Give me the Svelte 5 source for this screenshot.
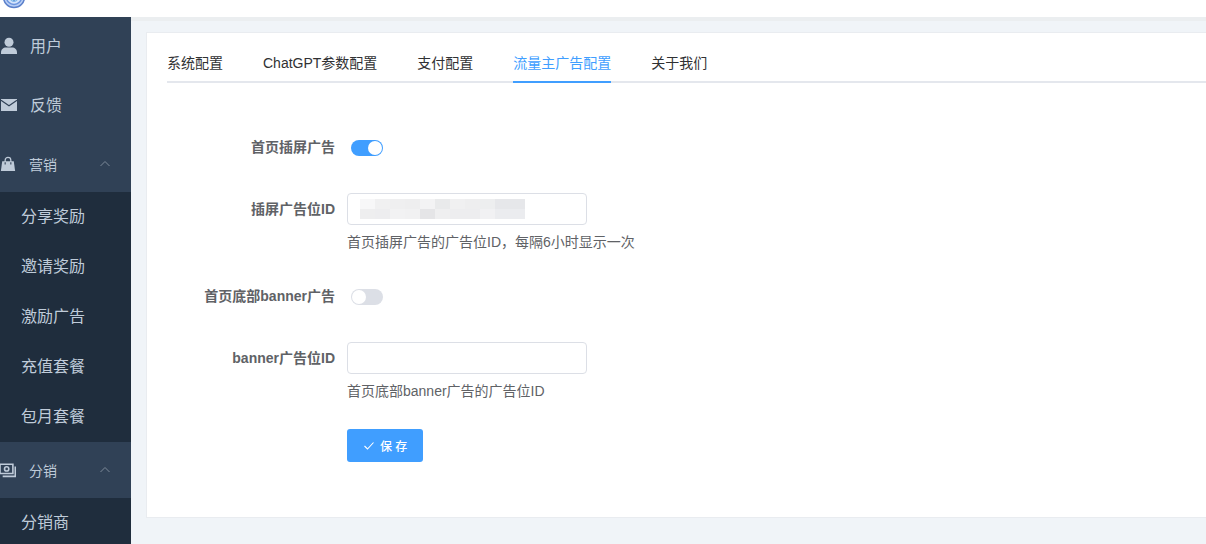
<script>
  let activeTab = $state('ads')
  let openMenus = $state({ marketing: true, distribution: true })

  const tabs = [
    { key: 'system', label: '系统配置' },
    { key: 'chatgpt', label: 'ChatGPT参数配置' },
    { key: 'pay', label: '支付配置' },
    { key: 'ads', label: '流量主广告配置' },
    { key: 'about', label: '关于我们' }
  ]

  const links = [
    { icon: 'user', label: '用户' },
    { icon: 'mail', label: '反馈' }
  ]

  const menus = [
    { key: 'marketing', icon: 'bag', label: '营销', items: ['分享奖励', '邀请奖励', '激励广告', '充值套餐', '包月套餐'] },
    { key: 'distribution', icon: 'money', label: '分销', items: ['分销商'] }
  ]

  // shades of the masked ad id, two rows
  const mask = [
    ['#f7f7f8', '#f0f0f1', '#efeff0', '#eeeeef', '#f3f3f4', '#e9eaeb', '#f0f0f1', '#eeeeef', '#edeeef', '#e6e7ea', '#e6e7ea'],
    ['#eeeeef', '#ededef', '#f2f2f3', '#f1f1f2', '#e5e5e7', '#efeff0', '#ededef', '#ededef', '#f1f1f3', '#ebecef', '#ebecef']
  ]

  let form = $state({
    insertOpen: true,
    insertId: '',
    bannerOpen: false,
    bannerId: ''
  })

  const toggleMenu = (key) => {
    openMenus[key] = !openMenus[key]
  }

  const save = (e) => {
    e.preventDefault()
  }
</script>

{#snippet icon(name)}
  <svg class="icon" viewBox="0 0 18 18" aria-hidden="true">
    {#if name == 'user'}
      <circle cx="9" cy="5.2" r="4.5" fill="currentColor" />
      <path d="M1 17v-1.500c0-3 2.200-5 5-5h6c2.800 0 5 2 5 5V17z" fill="currentColor" />
    {:else if name == 'mail'}
      <path d="M1 3h16v12H1z" fill="currentColor" />
      <path d="M1 4.200 9 9.800l8-5.600" fill="none" stroke="#304156" stroke-width="1.100" />
    {:else if name == 'bag'}
      <path d="M2.500 6h13l1.500 11H1z" fill="currentColor" />
      <path d="M5.800 7V4.800a3.200 3.200 0 0 1 6.400 0V7" fill="none" stroke="currentColor" stroke-width="1.400" />
      <path d="M5.800 7v2.500M12.200 7v2.500" stroke="#304156" stroke-width="1.200" />
    {:else}
      <path d="M0 2.500h14.500v10.500H0z" fill="none" stroke="currentColor" stroke-width="1.800" />
      <circle cx="7.500" cy="7.800" r="2.400" fill="none" stroke="currentColor" stroke-width="1.800" />
      <path d="M3 16.200h14.200V5" fill="none" stroke="currentColor" stroke-width="1.800" />
    {/if}
  </svg>
{/snippet}

<div class="layout">
  <header class="header">
    <svg class="logo" viewBox="0 0 24 24" role="img" aria-label="logo">
      <circle cx="12" cy="12" r="10.500" fill="#b9cff5" stroke="#5a7fca" stroke-width="1.500" />
      <circle cx="12" cy="12" r="7.500" fill="#d5e4fb" stroke="#6b94df" stroke-width="1.500" />
      <circle cx="12" cy="12" r="4.500" fill="#a5dcf5" stroke="#7fb2ea" />
      <path d="M9.500 13.500h5M12 11v5" stroke="#3c66b8" />
    </svg>
  </header>

  <div class="body">
    <nav class="sidebar">
      {#each links as link (link.label)}
        <a class="menu-link" href="#{link.icon}">
          {@render icon(link.icon)}
          <span>{link.label}</span>
        </a>
      {/each}

      {#each menus as menu (menu.key)}
        <button class="menu-title" type="button" aria-expanded={openMenus[menu.key]} onclick={() => toggleMenu(menu.key)}>
          {@render icon(menu.icon)}
          <span>{menu.label}</span>
          <svg class="arrow" class:closed={!openMenus[menu.key]} viewBox="0 0 12 12" aria-hidden="true">
            <path d="M1.500 8 6 3.500 10.500 8" fill="none" stroke="currentColor" />
          </svg>
        </button>
        {#if openMenus[menu.key]}
          <div class="submenu">
            {#each menu.items as item (item)}
              <a class="submenu-link" href="#{menu.key}">{item}</a>
            {/each}
          </div>
        {/if}
      {/each}
    </nav>

    <main class="main">
      <section class="card">
        <div class="tabs" role="tablist">
          {#each tabs as tab (tab.key)}
            <button
              class="tab"
              class:active={activeTab == tab.key}
              type="button"
              role="tab"
              aria-selected={activeTab == tab.key}
              onclick={() => (activeTab = tab.key)}>{tab.label}</button>
          {/each}
        </div>

        <form class="form" onsubmit={save}>
          <div class="form-item">
            <label class="label" for="insert-open">首页插屏广告</label>
            <div class="switch-wrap">
              <input id="insert-open" class="switch" type="checkbox" role="switch" bind:checked={form.insertOpen} />
            </div>
          </div>

          <div class="form-item">
            <label class="label" for="insert-id">插屏广告位ID</label>
            <div class="content">
              <div class="input-wrap">
                <input id="insert-id" class="input" type="text" bind:value={form.insertId} />
                <div class="mask" aria-hidden="true">
                  {#each mask as row}
                    <div class="mask-row">
                      {#each row as shade}
                        <i style="background: {shade}"></i>
                      {/each}
                    </div>
                  {/each}
                </div>
              </div>
              <p class="tip">首页插屏广告的广告位ID，每隔6小时显示一次</p>
            </div>
          </div>

          <div class="form-item">
            <label class="label" for="banner-open">首页底部banner广告</label>
            <div class="switch-wrap">
              <input id="banner-open" class="switch" type="checkbox" role="switch" bind:checked={form.bannerOpen} />
            </div>
          </div>

          <div class="form-item">
            <label class="label" for="banner-id">banner广告位ID</label>
            <div class="content">
              <input id="banner-id" class="input" type="text" bind:value={form.bannerId} />
              <p class="tip">首页底部banner广告的广告位ID</p>
            </div>
          </div>

          <button class="save" type="submit">
            <svg viewBox="0 0 12 12" aria-hidden="true">
              <path d="M1.500 6 4.500 9 10.500 2.500" fill="none" stroke="currentColor" stroke-width="1.100" />
            </svg>
            <span>保 存</span>
          </button>
        </form>
      </section>
    </main>
  </div>
</div>

<style>
  :global(body) {
    overflow: hidden;
  }

  .layout {
    display: flex;
    flex-direction: column;
    height: 100vh;
    overflow: hidden;
    background: #f0f4f8;
    font-family: "Liberation Sans", "Noto Sans CJK SC", sans-serif;
    font-size: 14px;
    color: #606266;
  }

  .layout :global(*) {
    box-sizing: border-box;
  }

  button,
  input {
    font: inherit;
    margin: 0;
  }

  .header {
    display: flex;
    align-items: flex-end;
    flex: none;
    height: 17px;
    padding: 0 2px 8px;
    background: #fff;
  }

  .logo {
    flex: none;
    width: 24px;
    height: 24px;
  }

  .body {
    display: flex;
    flex: 1;
    min-height: 0;
  }

  .sidebar {
    flex: none;
    width: 131px;
    overflow: hidden;
    background: #304156;
    color: #bfcbd9;
  }

  .menu-link {
    display: flex;
    align-items: center;
    gap: 12px;
    height: 62px;
    font-size: 16px;
    color: inherit;
    text-decoration: none;
  }

  .menu-link:first-child {
    height: 57px;
  }

  .menu-link span {
    padding-bottom: 2px;
  }

  .icon {
    flex: none;
    width: 18px;
    height: 18px;
  }

  .menu-title {
    display: flex;
    align-items: center;
    gap: 13px;
    width: 100%;
    height: 56px;
    padding: 0 20px 0 0;
    border: 0;
    background: none;
    color: inherit;
    text-align: left;
    cursor: pointer;
  }

  .menu-title .icon {
    width: 16px;
    height: 16px;
  }

  .arrow {
    width: 12px;
    height: 12px;
    margin-left: auto;
    color: #7d8a99;
  }

  .arrow.closed {
    transform: rotate(180deg);
  }

  .submenu {
    background: #1f2d3d;
  }

  .submenu-link {
    display: block;
    padding-left: 21px;
    font-size: 16px;
    line-height: 50px;
    color: inherit;
    text-decoration: none;
  }

  .main {
    flex: 1;
    min-width: 0;
    padding: 11px 0 0 15px;
    border-top: 4px solid #ebeef0;
  }

  .card {
    padding: 20px 0 55px 20px;
    border: 1px solid #e9ecf0;
    border-right: 0;
    background: #fff;
  }

  .tabs {
    display: flex;
    gap: 40px;
    border-bottom: 2px solid #e4e7ed;
  }

  .tab {
    height: 30px;
    margin-bottom: -2px;
    padding: 0 0 8px;
    border: 0;
    border-bottom: 2px solid transparent;
    background: none;
    line-height: 20px;
    color: #303133;
    cursor: pointer;
  }

  .tab.active {
    border-color: #409eff;
    color: #409eff;
  }

  .form {
    padding-top: 48px;
  }

  .form-item {
    display: flex;
    margin-bottom: 30px;
  }

  .label {
    flex: none;
    width: 168px;
    margin-right: 12px;
    line-height: 32px;
    font-weight: 700;
    text-align: right;
  }

  .switch-wrap {
    display: flex;
    align-items: center;
    height: 32px;
    padding: 2px 0 0 4px;
  }

  .switch {
    display: flex;
    appearance: none;
    width: 32px;
    height: 16px;
    padding: 1px;
    border-radius: 8px;
    background: #dcdfe6;
    cursor: pointer;
  }

  .switch::before {
    content: "";
    width: 14px;
    height: 14px;
    border-radius: 50%;
    background: #fff;
  }

  .switch:checked {
    justify-content: flex-end;
    background: #409eff;
  }

  .input-wrap {
    position: relative;
    width: 240px;
  }

  .input {
    display: block;
    width: 240px;
    height: 32px;
    padding: 0 12px;
    border: 1px solid #dcdfe6;
    border-radius: 4px;
    outline: none;
    background: #fff;
    color: #606266;
  }

  .input:focus {
    border-color: #409eff;
  }

  .mask {
    position: absolute;
    top: 6px;
    left: 13px;
    pointer-events: none;
  }

  .mask-row {
    display: flex;
  }

  .mask i {
    width: 15px;
    height: 10px;
  }

  .tip {
    margin: 9px 0 0;
    line-height: 16px;
  }

  .save {
    display: flex;
    align-items: center;
    gap: 5px;
    height: 33px;
    margin-left: 180px;
    padding: 0 16px;
    border: 0;
    border-radius: 3px;
    background: #409eff;
    font-size: 12px;
    font-weight: 500;
    color: #fff;
    cursor: pointer;
  }

  .save svg {
    width: 12px;
    height: 12px;
  }
</style>
